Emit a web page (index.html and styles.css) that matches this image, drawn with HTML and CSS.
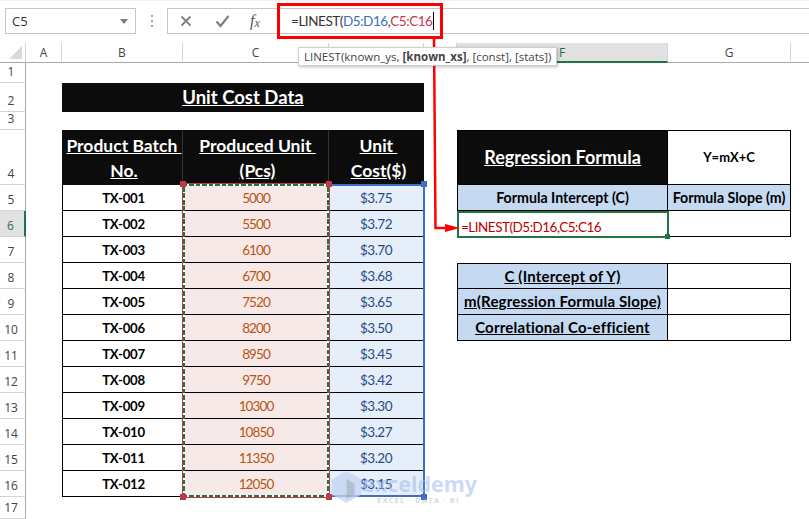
FILE: index.html
```html
<!DOCTYPE html>
<html lang="en">
<head>
<meta charset="utf-8">
<title>Unit Cost Data</title>
<link rel="stylesheet" href="styles.css">
</head>
<body>
<div class="app">
  <div class="fbar">
    <div class="namebox"><span>C5</span><svg class="caret" width="8" height="5" viewBox="0 0 8 5"><path d="M0 0h8L4 5z" fill="#7a7a7a"/></svg></div>
    <div class="grip"><i></i><i></i><i></i></div>
    <div class="fwrap">
      <div class="fbtns">
        <svg width="14" height="14" viewBox="0 0 14 14"><path d="M2.5 2.5l9 9M11.500 2.500l-9 9" stroke="#7f7f7f" stroke-width="1.800" fill="none"/></svg>
        <svg width="15" height="14" viewBox="0 0 15 14"><path d="M1.500 7.500l4 4.500 8-10" stroke="#7f7f7f" stroke-width="2.200" fill="none"/></svg>
        <span class="fx">f<sub>x</sub></span>
      </div>
      <div class="finput">=LINEST(<span class="ref-b">D5:D16</span>,<span class="ref-r">C5:C16</span><i class="cursor"></i></div>
    </div>
  </div>

  <div class="sheet">
    <div class="corner r0 c0"><svg width="13" height="13" viewBox="0 0 13 13"><path d="M13 0v13H0z" fill="#d9d9d9"/></svg></div>
    <div class="ch r0 cA">A</div>
    <div class="ch r0 cB">B</div>
    <div class="ch r0 cC">C</div>
    <div class="ch r0 cD"></div>
    <div class="ch r0 cE"></div>
    <div class="ch ch-on r0 cF">F</div>
    <div class="ch r0 cG">G</div>
    <div class="ch ch-end r0 cH"></div>

    <div class="rh r1 c0">1</div>
    <div class="rh r2 c0">2</div>
    <div class="rh r3 c0">3</div>
    <div class="rh r4 c0">4</div>
    <div class="rh r5 c0">5</div>
    <div class="rh rh-on r6 c0">6</div>
    <div class="rh r7 c0">7</div>
    <div class="rh r8 c0">8</div>
    <div class="rh r9 c0">9</div>
    <div class="rh r10 c0">10</div>
    <div class="rh r11 c0">11</div>
    <div class="rh r12 c0">12</div>
    <div class="rh r13 c0">13</div>
    <div class="rh r14 c0">14</div>
    <div class="rh r15 c0">15</div>
    <div class="rh r16 c0">16</div>
    <div class="rh r17 c0">17</div>

    <div class="title r2 cBD"><u>Unit Cost Data</u></div>

    <div class="hd r4 cB"><u>Product Batch </u><br><u>No.</u></div>
    <div class="hd r4 cC"><u>Produced Unit </u><br><u>(Pcs)</u></div>
    <div class="hd r4 cD"><u>Unit </u><br><u>Cost($)</u></div>

    <div class="id r5 cB">TX-001</div><div class="un r5 cC">5000</div><div class="co r5 cD">$3.75</div>
    <div class="id r6 cB">TX-002</div><div class="un r6 cC">5500</div><div class="co r6 cD">$3.72</div>
    <div class="id r7 cB">TX-003</div><div class="un r7 cC">6100</div><div class="co r7 cD">$3.70</div>
    <div class="id r8 cB">TX-004</div><div class="un r8 cC">6700</div><div class="co r8 cD">$3.68</div>
    <div class="id r9 cB">TX-005</div><div class="un r9 cC">7520</div><div class="co r9 cD">$3.65</div>
    <div class="id r10 cB">TX-006</div><div class="un r10 cC">8200</div><div class="co r10 cD">$3.50</div>
    <div class="id r11 cB">TX-007</div><div class="un r11 cC">8950</div><div class="co r11 cD">$3.45</div>
    <div class="id r12 cB">TX-008</div><div class="un r12 cC">9750</div><div class="co r12 cD">$3.42</div>
    <div class="id r13 cB">TX-009</div><div class="un r13 cC">10300</div><div class="co r13 cD">$3.30</div>
    <div class="id r14 cB">TX-010</div><div class="un r14 cC">10850</div><div class="co r14 cD">$3.27</div>
    <div class="id r15 cB">TX-011</div><div class="un r15 cC">11350</div><div class="co r15 cD">$3.20</div>
    <div class="id r16 cB">TX-012</div><div class="un r16 cC">12050</div><div class="co r16 cD">$3.15</div>

    <div class="rf-title r4 cF"><u>Regression Formula</u></div>
    <div class="rf-eq r4 cG">Y=mX+C</div>
    <div class="rf-head r5 cF">Formula Intercept (C)</div>
    <div class="rf-head r5 cG">Formula Slope (m)</div>
    <div class="rf-active r6 cF">=LINEST(D5:D16,C5:C16<i class="fill"></i></div>
    <div class="rf-cell r6 cG"></div>

    <div class="rf-label r8 cF"><u>C (Intercept of Y)</u></div><div class="rf-cell r8 cG"></div>
    <div class="rf-label r9 cF"><u>m(Regression Formula Slope)</u></div><div class="rf-cell r9 cG"></div>
    <div class="rf-label r10 cF"><u>Correlational Co-efficient</u></div><div class="rf-cell r10 cG"></div>

    <div class="sel-c rC"><b class="h tl"></b><b class="h tr"></b><b class="h bl"></b><b class="h br"></b></div>
    <div class="sel-d rC"><b class="h2 tr2"></b><b class="h2 br2"></b></div>
  </div>

  <div class="tip">LINEST(known_ys, <b>[known_xs]</b>, [const], [stats])</div>
  <div class="callout"></div>
  <svg class="arrow" width="42" height="200" viewBox="0 0 42 200"><path d="M14 0l1.500 190H27" stroke="#f00" stroke-width="2.500" fill="none"/><path d="M25 186l15 4-15 4z" fill="#f00"/></svg>
  <div class="wm">
    <svg width="31" height="32" viewBox="0 0 31 32"><path d="M15.500 0l15 8.500v15l-15 8.500-15-8.500v-15z" fill="#c3d3f2" opacity=".75"/><path d="M15.500 8l8 4.500v11l-8 4.500z" fill="#9fa9b8" opacity=".55"/></svg>
    <div class="wm-t"><div class="wm-a">exceldemy</div><div class="wm-b">EXCEL · DATA · BI</div></div>
  </div>
</div>
</body>
</html>
```
FILE: styles.css
```css
* { box-sizing: border-box; }
html, body { margin: 0; padding: 0; background: #fff; }
.app { position: relative; width: 809px; height: 519px; overflow: hidden; font-family: "Lato", "Liberation Sans", sans-serif; color: #000; }

.fbar { height: 43px; padding: 8px 0 0 5px; display: flex; align-items: flex-start; background: #fff; border-top: 1px solid #f1f1f1; }
.namebox { width: 131px; height: 26px; border: 1px solid #c6c6c6; display: flex; align-items: center; justify-content: space-between; padding: 0 7px 0 6px; font: 13px "Open Sans", sans-serif; color: #333; margin-top: -1px; }
.grip { width: 31px; height: 26px; display: flex; flex-direction: column; align-items: center; justify-content: center; gap: 3px; margin-top: -1px; }
.grip i { width: 2px; height: 2px; background: #a6a6a6; }
.fwrap { flex: 1; height: 26px; display: flex; border: 1px solid #c6c6c6; border-right: 0; margin-top: -1px; }
.fbtns { width: 111px; display: flex; align-items: center; padding-left: 11px; gap: 22px; flex: none; }
.fx { font: italic 16px "Liberation Serif", serif; color: #555; margin-left: -2px; }
.fx sub { font-size: 12px; vertical-align: -1px; line-height: 0; }
.finput { flex: 1; padding-left: 12px; font: 13.500px/24px "Lato", sans-serif; letter-spacing: -0.450px; color: #333; display: flex; align-items: center; white-space: pre; }
.ref-b { color: #3a70c4; }
.ref-r { color: #c8374a; }
.cursor { width: 1px; height: 18px; background: #000; margin-left: 1px; }

.sheet { display: grid; grid-template-columns: 26px 36px 121px 146px 95px 33px 211px 123px 1fr; grid-template-rows: 20px 20px 29px 18px 54.500px repeat(12, 26px) 22px; }
.c0 { grid-column: 1; } .cA { grid-column: 2; } .cB { grid-column: 3; } .cC { grid-column: 4; } .cD { grid-column: 5; } .cE { grid-column: 6; } .cF { grid-column: 7; } .cG { grid-column: 8; } .cH { grid-column: 9; } .cBD { grid-column: 3 / 6; }
.r0 { grid-row: 1; } .r1 { grid-row: 2; } .r2 { grid-row: 3; } .r3 { grid-row: 4; } .r4 { grid-row: 5; } .r5 { grid-row: 6; } .r6 { grid-row: 7; } .r7 { grid-row: 8; } .r8 { grid-row: 9; } .r9 { grid-row: 10; } .r10 { grid-row: 11; } .r11 { grid-row: 12; } .r12 { grid-row: 13; } .r13 { grid-row: 14; } .r14 { grid-row: 15; } .r15 { grid-row: 16; } .r16 { grid-row: 17; } .r17 { grid-row: 18; }
.rC { grid-row: 6 / 18; }

.corner { border-right: 1px solid #d4d4d4; border-bottom: 1px solid #a8a8a8; display: flex; align-items: flex-end; justify-content: flex-end; padding: 0 3px 3px 0; }
.ch { border-right: 1px solid #d4d4d4; border-bottom: 1px solid #a8a8a8; display: flex; align-items: center; justify-content: center; font: 12px "Open Sans", sans-serif; color: #444; }
.ch-on { background: #e1e1e1; border-bottom: 2px solid #217346; color: #217346; justify-content: flex-start; padding-left: 102px; }
.ch-end { border-right: 0; }
.rh { border-right: 1px solid #a8a8a8; border-bottom: 1px solid #d4d4d4; display: flex; align-items: flex-end; justify-content: center; padding-bottom: 2px; font: 12px "Open Sans", sans-serif; color: #444; padding-right: 3px; }
.rh-on { background: #e1e1e1; color: #217346; border-right: 2px solid #217346; }

.title { background: #0c0c0c; color: #fff; font-weight: 700; font-size: 18.500px; display: flex; align-items: center; justify-content: center; padding-bottom: 2px; }
.hd { background: #0c0c0c; color: #fff; font-weight: 700; font-size: 17.500px; line-height: 25px; text-align: center; border-right: 1px solid #333; white-space: pre; padding: 3px 0 0 4px; }
.hd.cD { border-right: 0; }
.id, .un, .co { display: flex; align-items: center; justify-content: center; border-bottom: 1px solid #000; padding-top: 1px; }
.id { font-weight: 700; font-size: 13.200px; letter-spacing: -0.300px; border-left: 1px solid #000; padding-left: 1px; }
.un { background: #f8e9e9; color: #b9540f; font-size: 13.500px; letter-spacing: -0.900px; }
.co { background: #e6eef9; color: #264a8a; font-size: 13.500px; letter-spacing: -0.500px; border-right: 1px solid #000; }

.rf-title { background: #0c0c0c; color: #fff; font-weight: 700; font-size: 18px; display: flex; align-items: center; justify-content: center; border: 1px solid #000; }
.rf-eq { display: flex; align-items: center; justify-content: center; font-weight: 700; font-size: 13px; border: 1px solid #000; border-left: 0; }
.rf-head { background: #c5d9f1; font-weight: 700; font-size: 14.200px; display: flex; align-items: center; justify-content: center; border: 1px solid #000; border-top: 0; white-space: nowrap; }
.rf-head.cG { border-left: 0; }
.rf-cell { border: 1px solid #000; border-left: 0; border-top: 0; }
.r8.rf-cell { border-top: 1px solid #000; }
.rf-active { position: relative; z-index: 2; border: 2px solid #217346; margin: 0 -1px -1px 0; color: #c00000; font-size: 13.500px; letter-spacing: -0.500px; display: flex; align-items: flex-end; padding: 0 0 1px 2px; }
.fill { position: absolute; right: -3px; bottom: -3px; width: 5px; height: 5px; background: #217346; border: 0; }
.rf-label { background: #c5d9f1; font-weight: 700; font-size: 15px; letter-spacing: .2px; display: flex; align-items: center; justify-content: center; border: 1px solid #000; border-top: 0; white-space: nowrap; }
.r8.rf-label { border-top: 1px solid #000; }

.sel-c { grid-column: 4; position: relative; margin: -1px 0 0 0; z-index: 3; outline: 1px solid #c0394a;
  background:
    repeating-linear-gradient(90deg, #217346 0 4.500px, #fff 4.500px 6.500px) left top / 100% 2px no-repeat,
    repeating-linear-gradient(90deg, #217346 0 4.500px, #fff 4.500px 6.500px) left bottom / 100% 2px no-repeat,
    repeating-linear-gradient(0deg, #217346 0 4.500px, #fff 4.500px 6.500px) left top / 2px 100% no-repeat,
    repeating-linear-gradient(0deg, #217346 0 4.500px, #fff 4.500px 6.500px) right top / 2px 100% no-repeat; }
.sel-d { grid-column: 5; position: relative; border-top: 2px solid #3f6fc4; border-right: 2px solid #3f6fc4; border-bottom: 2px solid #3f6fc4; margin: -1px -1px 0 0; z-index: 2; }
.h { position: absolute; width: 6px; height: 6px; background: #c0394a; border: 0; }
.tl { left: -3px; top: -3px; } .tr { right: -3px; top: -3px; } .bl { left: -3px; bottom: -3px; } .br { right: -3px; bottom: -3px; }
.h2 { position: absolute; width: 6px; height: 6px; background: #3f6fc4; }
.tr2 { right: -4px; top: -5px; } .br2 { right: -4px; bottom: -5px; }

.tip { position: absolute; left: 298px; top: 47px; width: 259px; height: 19px; background: #fff; border: 1px solid #d0d0d0; box-shadow: 1px 1px 3px rgba(0,0,0,.25); font: 11.500px/17px "Open Sans", sans-serif; color: #444; padding-left: 5px; white-space: nowrap; z-index: 6; }
.callout { position: absolute; left: 277px; top: 3px; width: 166px; height: 36px; border: 3px solid #f00; z-index: 5; }
.arrow { position: absolute; left: 420px; top: 38px; z-index: 5; }
.wm { position: absolute; left: 331px; top: 471px; display: flex; gap: 0; z-index: 7; }
.wm-a { font: 700 21.500px/25px "Open Sans", sans-serif; color: rgba(160,185,240,.55); }
.wm-b { font: 700 7.500px/9px "Open Sans", sans-serif; letter-spacing: 1.200px; color: rgba(130,140,160,.35); padding-left: 15px; white-space: nowrap; }
```
